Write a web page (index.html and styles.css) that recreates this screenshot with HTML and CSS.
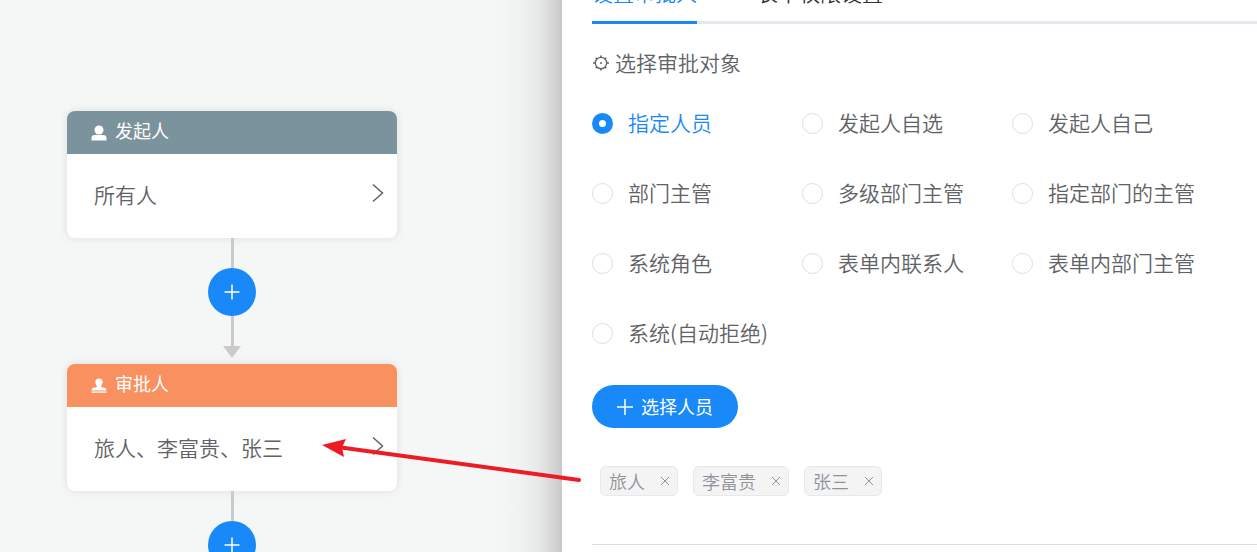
FILE: index.html
```html
<!DOCTYPE html>
<html lang="zh-CN">
<head>
  <meta charset="UTF-8">
  <meta name="viewport" content="width=device-width, initial-scale=1.0">
  <title>审批流程设置</title>
  <link rel="stylesheet" href="styles.css">
</head>
<body>
  <!-- 流程画布 -->
  <div class="canvas">
    <div class="node">
      <div class="node-header node-start">
        <svg class="node-icon" viewBox="0 0 16 16" fill="currentColor">
          <circle cx="8" cy="5" r="4.5"/>
          <path d="M0.5 15.5v-2.500c0-2 1.300-3 3-3h9c1.700 0 3 1 3 3v2.500z"/>
        </svg>
        <span>发起人</span>
      </div>
      <div class="node-body">
        <span>所有人</span>
        <svg class="node-arrow" viewBox="0 0 12 20"><path d="M1 1.500l9.500 8.500-9.500 8.500"/></svg>
      </div>
    </div>

    <div class="link">
      <button class="btn-add" aria-label="添加节点">
        <svg viewBox="0 0 16 16"><path d="M8 0.500v15M0.500 8h15"/></svg>
      </button>
      <div class="link-arrow"></div>
    </div>

    <div class="node">
      <div class="node-header node-approver">
        <svg class="node-icon" viewBox="0 0 16 16" fill="currentColor">
          <path d="M8 0.500a3.700 3.700 0 0 0-3.700 3.700c0 2 1.500 2.700 1.500 4.300 0 .7-.5 1-1.300 1H3.500c-1.600 0-2.800.8-3 3h15c-.2-2.200-1.400-3-3-3h-1c-.8 0-1.300-.3-1.300-1 0-1.600 1.500-2.300 1.500-4.300A3.700 3.700 0 0 0 8 0.500z"/>
          <path d="M0.500 13.500h15v1.300h-15z"/>
        </svg>
        <span>审批人</span>
      </div>
      <div class="node-body">
        <span>旅人、李富贵、张三</span>
        <svg class="node-arrow" viewBox="0 0 12 20"><path d="M1 1.500l9.500 8.500-9.500 8.500"/></svg>
      </div>
    </div>

    <div class="link">
      <button class="btn-add" aria-label="添加节点">
        <svg viewBox="0 0 16 16"><path d="M8 0.500v15M0.500 8h15"/></svg>
      </button>
      <div class="link-arrow"></div>
    </div>

    <svg class="pointer" viewBox="0 0 262 46">
      <path d="M0 5L24 -1 20 7.500 22 17z" fill="#ed1c24"/>
      <path d="M19 7.500L257 40" stroke="#ed1c24" stroke-width="4" stroke-linecap="round"/>
    </svg>
  </div>

  <!-- 右侧设置面板 -->
  <div class="drawer">
    <div class="tabs">
      <a class="tab active" href="#approver">设置审批人</a>
      <a class="tab" href="#form">表单权限设置</a>
    </div>

    <h3 class="section-title">
      <svg viewBox="0 0 18 18" fill="none" stroke="currentColor">
        <circle cx="9" cy="9" r="5.700" stroke-width="1.300"/>
        <circle cx="9" cy="9" r="1" fill="currentColor" stroke="none"/>
        <path stroke-width="1.600" d="M9 1.500v2M9 14.500v2M1 9h2.500M14.500 9h2.500M3.800 3.800l1.200 1.200M13 13l1.200 1.200M3.800 14.200l1.200-1.200M13 5l1.200-1.200"/>
      </svg>
      <span>选择审批对象</span>
    </h3>

    <div class="radio-group">
      <label class="radio"><input type="radio" name="target" checked><span>指定人员</span></label>
      <label class="radio"><input type="radio" name="target"><span>发起人自选</span></label>
      <label class="radio"><input type="radio" name="target"><span>发起人自己</span></label>
      <label class="radio"><input type="radio" name="target"><span>部门主管</span></label>
      <label class="radio"><input type="radio" name="target"><span>多级部门主管</span></label>
      <label class="radio"><input type="radio" name="target"><span>指定部门的主管</span></label>
      <label class="radio"><input type="radio" name="target"><span>系统角色</span></label>
      <label class="radio"><input type="radio" name="target"><span>表单内联系人</span></label>
      <label class="radio"><input type="radio" name="target"><span>表单内部门主管</span></label>
      <label class="radio"><input type="radio" name="target"><span>系统(自动拒绝)</span></label>
    </div>

    <button class="btn-select">
      <svg viewBox="0 0 18 18"><path d="M9 1v16M1 9h16"/></svg>
      <span>选择人员</span>
    </button>

    <div class="tags">
      <span class="tag">旅人<button class="tag-close" aria-label="移除旅人"><svg viewBox="0 0 12 12"><path d="M2 2l8 8M10 2l-8 8"/></svg></button></span>
      <span class="tag">李富贵<button class="tag-close" aria-label="移除李富贵"><svg viewBox="0 0 12 12"><path d="M2 2l8 8M10 2l-8 8"/></svg></button></span>
      <span class="tag">张三<button class="tag-close" aria-label="移除张三"><svg viewBox="0 0 12 12"><path d="M2 2l8 8M10 2l-8 8"/></svg></button></span>
    </div>

    <hr class="divider">
  </div>
</body>
</html>
```
FILE: styles.css
```css
* {
  box-sizing: border-box;
}
body {
  margin: 0;
  display: flex;
  height: 100vh;
  overflow: hidden;
  font-family: "Noto Sans CJK SC", sans-serif;
  font-size: 21px;
  font-weight: 350;
  color: #606266;
  background: #fff;
}
button {
  font: inherit;
  border: none;
  padding: 0;
  cursor: pointer;
}
svg {
  flex: none;
  display: block;
}

/* 流程画布 */
.canvas {
  position: relative;
  flex: 0 0 562px;
  padding: 111px 0 0 67px;
  /* 右侧为面板投影 */
  background: linear-gradient(to left, #c6c7c6, #d3d4d3 8px, #dfe1e0 16px, #e9ebea 26px, #f1f3f2 42px, #f5f7f6 64px) right / 64px 100% no-repeat #f5f7f6;
}
.node {
  width: 330px;
  border-radius: 8px;
  background: #fff;
  box-shadow: 0 0 8px rgba(0, 0, 0, 0.1);
  overflow: hidden;
}
.node-header {
  display: flex;
  align-items: center;
  gap: 8px;
  height: 43px;
  padding: 0 24px 5px;
  color: #fff;
  font-size: 18px;
  font-weight: 400;
}
.node-start {
  background: #7b939c;
}
.node-approver {
  background: #f89060;
}
.node-icon {
  width: 16px;
  height: 16px;
  margin-top: 6px;
}
.node-body {
  display: flex;
  align-items: center;
  justify-content: space-between;
  height: 84px;
  padding: 0 13px 4px 27px;
}
.node-arrow {
  width: 12px;
  height: 20px;
  margin-bottom: 2px;
  fill: none;
  stroke: #606266;
  stroke-width: 1.5;
}

/* 节点连线 */
.link {
  display: flex;
  flex-direction: column;
  align-items: center;
  width: 330px;
  height: 126px;
  padding: 30px 0 6px;
  background: linear-gradient(#cacaca, #cacaca) center top / 3px 108px no-repeat;
}
.btn-add {
  display: flex;
  align-items: center;
  justify-content: center;
  flex: none;
  width: 48px;
  height: 48px;
  margin-bottom: 30px;
  border-radius: 50%;
  background: #1989fa;
}
.btn-add svg {
  width: 16px;
  height: 16px;
  stroke: #fff;
  stroke-width: 1.5;
}
.link-arrow {
  border: 9px solid transparent;
  border-top: 12px solid #cacaca;
  border-bottom: none;
}
.pointer {
  position: absolute;
  left: 322px;
  top: 440px;
  z-index: 2;
  width: 262px;
  height: 46px;
  overflow: visible;
}

/* 设置面板 */
.drawer {
  flex: 1;
  min-width: 0;
  padding-left: 30px;
}
.tabs {
  display: flex;
  align-items: flex-end;
  gap: 60px;
  height: 24px;
  overflow: hidden;
  box-shadow: inset 0 -3px #e4e7ed;
}
.tab {
  flex: none;
  padding-bottom: 14px;
  border-bottom: 3px solid transparent;
  line-height: 30px;
  color: #303133;
  text-decoration: none;
}
.tab.active {
  color: #1989fa;
  border-color: #1989fa;
}
.section-title {
  display: flex;
  align-items: center;
  gap: 5px;
  margin: 24px 0 0;
  font-size: 21px;
  font-weight: inherit;
  line-height: 28px;
}
.section-title svg {
  width: 18px;
  height: 18px;
}
.section-title span,
.radio span,
.btn-select span {
  padding-bottom: 2px;
}
.radio-group {
  display: grid;
  grid-template-columns: repeat(3, 210px);
  grid-auto-rows: 30px;
  row-gap: 40px;
  margin-top: 30px;
}
.radio {
  display: flex;
  align-items: center;
  gap: 15px;
  white-space: nowrap;
  cursor: pointer;
}
.radio input {
  appearance: none;
  width: 21px;
  height: 21px;
  margin: 0;
  border: 1px solid #dcdfe6;
  border-radius: 50%;
  background: #fff;
}
.radio input:checked {
  border: 7px solid #1989fa;
}
.radio input:checked + span {
  color: #1989fa;
}
.btn-select {
  display: flex;
  align-items: center;
  gap: 7px;
  height: 43px;
  margin-top: 37px;
  padding: 0 25px 0 24px;
  border-radius: 22px;
  background: #1989fa;
  color: #fff;
  font-size: 18px;
  font-weight: 400;
}
.btn-select svg {
  width: 18px;
  height: 18px;
  stroke: #fff;
  stroke-width: 1.5;
}
.tags {
  display: flex;
  gap: 15px;
  margin: 38px 0 0 8px;
}
.tag {
  display: flex;
  align-items: center;
  gap: 14px;
  height: 30px;
  padding: 0 6px 0 8px;
  border: 1px solid #e9e9eb;
  border-radius: 6px;
  background: #f4f4f5;
  color: #909399;
  font-size: 18px;
}
.tag-close {
  background: none;
}
.tag-close svg {
  width: 12px;
  height: 12px;
  stroke: #909399;
}
.divider {
  height: 1px;
  margin: 48px 0 0;
  border: none;
  background: #dcdfe6;
}
```
